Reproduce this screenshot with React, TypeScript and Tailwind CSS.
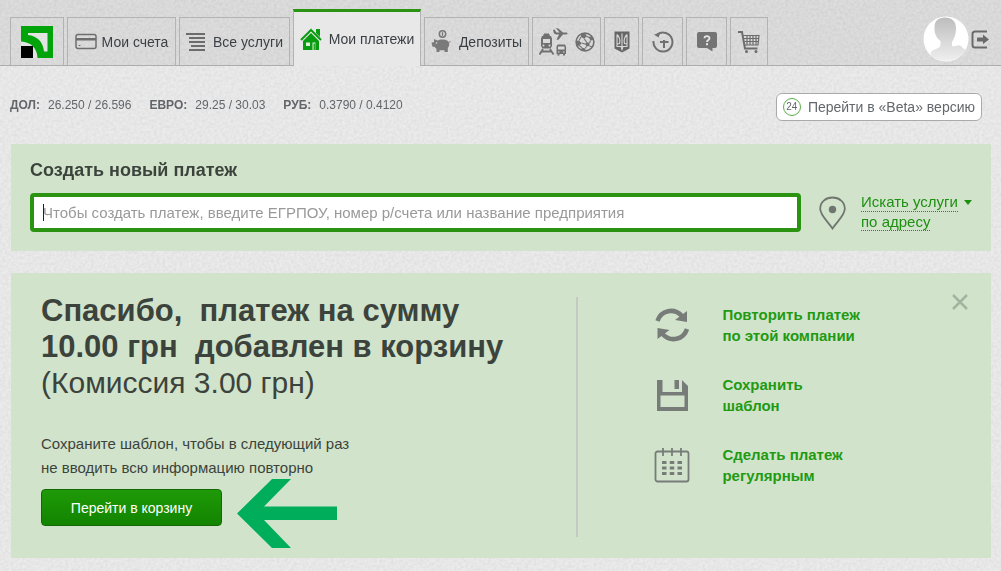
import type { ReactNode } from 'react';

const RATES = [
  { name: 'ДОЛ:', value: '26.250 / 26.596' },
  { name: 'ЕВРО:', value: '29.25 / 30.03' },
  { name: 'РУБ:', value: '0.3790 / 0.4120' },
];

function LogoIcon() {
  return (
    <svg width="32" height="32" viewBox="0 0 32 32" aria-hidden="true">
      <rect width="32" height="32" fill="#03a30c" />
      <path d="M7 7H26.500V25.500H23C22 16 16.500 10 7 9Z" fill="#e2e4e2" />
      <path d="M0 15.500C10 16 16 22 16.500 32H0Z" fill="#e2e4e2" />
      <rect y="20" width="12" height="12" fill="#000" />
    </svg>
  );
}

function CardIcon() {
  return (
    <svg width="22" height="17" viewBox="0 0 22 17" fill="none" aria-hidden="true">
      <rect x="1" y="1.500" width="20" height="14" rx="2" stroke="#6e6e6e" strokeWidth="1.500" />
      <path d="M1 5H21V7.500H1Z" fill="#6e6e6e" />
      <path d="M3.500 12.500H5.500" stroke="#6e6e6e" />
    </svg>
  );
}

function ListIcon() {
  return (
    <svg width="20" height="20" viewBox="0 0 20 20" aria-hidden="true">
      <path d="M0 2H19M3 6H19M3 10H19M5 14H19M3 18H19" stroke="#6c6c6c" strokeWidth="2" />
    </svg>
  );
}

function HouseIcon() {
  return (
    <svg width="22" height="23" viewBox="0 0 22 23" aria-hidden="true">
      <path d="M1 12L11 2L21 12" fill="none" stroke="#0a9c10" strokeWidth="2" />
      <path d="M16 1H20V9L16 5Z" fill="#0a9c10" />
      <path d="M11 5L19 13V22H3V13Z" fill="#0a9c10" />
      <path d="M6 14.500H10V18H6Z" fill="#dff0dc" />
      <path d="M12.500 14.500H15.500V22H12.500Z" fill="#dff0dc" />
      <path d="M13.500 15.500H15.500V22H13.500Z" fill="#2aa72e" />
    </svg>
  );
}

function PiggyIcon() {
  return (
    <svg width="20" height="23" viewBox="0 0 20 23" aria-hidden="true">
      <circle cx="11.500" cy="4" r="3.200" fill="none" stroke="#777" strokeWidth="1.500" />
      <path d="M11.500 2.200V5.800" stroke="#777" strokeWidth="1.300" />
      <path
        d="M3 9L6.500 10.500C8.500 9.300 15 8.600 17.300 11.500C19 13.800 18 16.500 16.800 18V22H13.500V20.300H8.500V22H5.500V19L3.300 16.800H1.500L0.500 12.800L3 12Z"
        fill="#7a7a7a"
      />
      <path d="M17.500 12.500L19.500 11.500" stroke="#7a7a7a" />
      <circle cx="5.500" cy="13" r="0.800" fill="#ddd" />
    </svg>
  );
}

function TransportIcon() {
  return (
    <svg width="29" height="28" viewBox="0 0 29 28" fill="#707070" aria-hidden="true">
      <path d="M5 5.500H10L11 8H4ZM3 8H12L13 10.500V18L11.500 20.500H3.500L2 18V10.500Z" />
      <path d="M4 11H11V15H4Z" fill="#dadada" />
      <circle cx="4.500" cy="17.500" r="1" fill="#dadada" />
      <circle cx="10.500" cy="17.500" r="1" fill="#dadada" />
      <path d="M4 21L0.500 26.500M11 21L14.500 26.500M2.500 23.500H12.500" stroke="#707070" strokeWidth="1.800" />
      <path d="M14 2L15.500 1.500L17.500 4.500H20.500L17 0.200H19L24 4.500H27.500C29 5 29 6 27.500 6.500H24L19.500 11.800H17.500L20 6.500H17L15 5.500Z" />
      <path d="M18.500 16.500H26L27 18.500V26H26V27.500H24V26H20.500V27.500H18.500V26H17.500V18.500Z" />
      <path d="M19 18.500H25.500V21.500H19ZM19 23.500H20.500V24.500H19ZM24 23.500H25.500V24.500H24Z" fill="#dadada" />
    </svg>
  );
}

function BallIcon() {
  return (
    <svg width="20" height="20" viewBox="0 0 20 20" fill="none" aria-hidden="true">
      <circle cx="10" cy="10" r="8.900" stroke="#707070" strokeWidth="1.600" />
      <path d="M6 1.800L10.500 2L12 4.500L9 6.500L6 5ZM13.500 5L17 4L18.500 8L15.500 8.500ZM1 9L4 8.500L6.500 11L4.500 14L2 13.500ZM11.500 10L14.500 11L14.500 14L11.500 14.500L10 12ZM7 15.500L10 16.500L10.500 18.800L6 18Z" fill="#707070" />
      <path d="M6 5L4 8.500M12 4.500L14 5.500M9 6.500L11.500 10M6.500 11L10 12M15.500 8.500L14.500 11M4.500 14L7 15.500M11.500 14.500L10 16.500M14.500 14L17 15" stroke="#707070" strokeWidth="1.100" />
    </svg>
  );
}

function TridentIcon() {
  return (
    <svg width="16" height="22" viewBox="0 0 16 22" fill="none" aria-hidden="true">
      <path d="M0.500 0.500H15.500V17.500L8 21.500L0.500 17.500Z" fill="#666" />
      <path d="M3 3.500V15.500H7L8 18.500L9 15.500H13V3.500M8 2.500V16M3 3.500C5.500 6 6.500 9 5.500 12.500L3 13M13 3.500C10.500 6 9.500 9 10.500 12.500L13 13" stroke="#d8d8d8" strokeWidth="1.100" />
    </svg>
  );
}

function HistoryIcon() {
  return (
    <svg width="22" height="22" viewBox="0 0 22 22" fill="none" aria-hidden="true">
      <path d="M1.500 10A9.500 9.500 0 1 0 5.500 3.300" stroke="#707070" strokeWidth="2" />
      <path d="M2 3.500L8.500 1.500L6.500 6.500Z" fill="#707070" />
      <path d="M8 11H16.500M12 9V17" stroke="#707070" strokeWidth="2" />
    </svg>
  );
}

function HelpIcon() {
  return (
    <svg width="20" height="20" viewBox="0 0 20 20" aria-hidden="true">
      <path d="M2 0H18Q20 0 20 2V14Q20 16 18 16H15.500V19.500L10 16H2Q0 16 0 14V2Q0 0 2 0Z" fill="#747474" />
      <path d="M7.500 6.200C7.500 3.600 12.500 3.500 12.500 6.200C12.500 8 10 8 10 10" fill="none" stroke="#e8e8e8" strokeWidth="1.800" />
      <rect x="9" y="11.200" width="2" height="2" fill="#e8e8e8" />
    </svg>
  );
}

function CartIcon() {
  return (
    <svg width="22" height="22" viewBox="0 0 22 22" fill="none" aria-hidden="true">
      <path d="M0 1H4L7 17.500H19.500" stroke="#6c6c6c" strokeWidth="2" />
      <path d="M5 4.500H21L20 14H7M6 7.500H20.500M6.500 10.500H20.500M9 4.500V14M12 4.500V14M15 4.500V14M18 4.500V14" stroke="#6c6c6c" strokeWidth="1.200" />
      <circle cx="8.500" cy="20.500" r="1.500" fill="#6c6c6c" />
      <circle cx="18" cy="20.500" r="1.500" fill="#6c6c6c" />
    </svg>
  );
}

function Avatar() {
  return (
    <svg width="46" height="46" viewBox="0 0 46 46" aria-hidden="true">
      <defs>
        <linearGradient id="person" x1="0" y1="0" x2="0" y2="1">
          <stop offset="0" stopColor="#bdbdbd" />
          <stop offset="1" stopColor="#efefef" />
        </linearGradient>
      </defs>
      <circle cx="23" cy="23" r="22.500" fill="#fff" />
      <path
        d="M22 1.500C29 1.500 33.500 6 33 13C32.800 19 31 23 29 26V30C33 31 36 28 38 30C40 33 42 33 43.500 34C36 46 17 48 8 40C7 37 8 35 11.500 33.500C14 32.500 17 32 17.500 29V25C13 22 11 17 11.500 11C11.700 5 15 1.500 22 1.500Z"
        fill="url(#person)"
      />
    </svg>
  );
}

function LogoutIcon() {
  return (
    <svg width="18" height="19" viewBox="0 0 18 19" aria-hidden="true">
      <path d="M16 1.500H4Q1.500 1.500 1.500 4V15Q1.500 17.500 4 17.500H16" fill="none" stroke="#6a6a6a" strokeWidth="2" />
      <path d="M6 7.500H12V4.500L18 9.500L12 14V11.500H6Z" fill="#6a6a6a" />
    </svg>
  );
}

function PinIcon() {
  return (
    <svg width="27" height="34" viewBox="0 0 27 34" className="mr-[15px] ml-[18px] shrink-0" aria-hidden="true">
      <path d="M13.500 32.500C9 25.500 1.200 19.500 1.200 12.800C1.200 6 6.800 1.500 13.500 1.500C20.200 1.500 25.800 6 25.800 12.800C25.800 19.500 18 25.500 13.500 32.500Z" fill="none" stroke="#6f766f" strokeWidth="1.800" />
      <circle cx="13.500" cy="13.500" r="3.700" fill="#6f766f" />
    </svg>
  );
}

function RepeatIcon() {
  return (
    <svg width="36" height="36" viewBox="0 0 36 36" aria-hidden="true">
      <path d="M3.500 14C7 3 20 0.500 28 9" fill="none" stroke="#777c78" strokeWidth="4.500" />
      <path d="M33 4V15L21 13Z" fill="#777c78" />
      <path d="M33 22C29.500 33 16.500 35.500 8.500 27" fill="none" stroke="#777c78" strokeWidth="4.500" />
      <path d="M3.500 32V21L15.500 23Z" fill="#777c78" />
    </svg>
  );
}

function SaveIcon() {
  return (
    <svg width="36" height="36" viewBox="0 0 36 36" aria-hidden="true">
      <path d="M3 3H8.500V15H28V3L34 9V34H3ZM6.500 18.500V30H30.500V18.500Z" fill="#777c78" fillRule="evenodd" />
      <rect x="20.500" y="3" width="4.500" height="9" fill="#777c78" />
    </svg>
  );
}

function CalendarIcon() {
  return (
    <svg width="36" height="36" viewBox="0 0 36 36" aria-hidden="true">
      <rect x="1.500" y="4.500" width="33" height="30" rx="2" fill="none" stroke="#777c78" strokeWidth="1.800" />
      <path d="M9 1V9M18 1V9M27 1V9" stroke="#777c78" strokeWidth="1.800" />
      <path d="M8 15.500H28M8 21H28M8 26.500H28" stroke="#777c78" strokeWidth="3" strokeDasharray="4.500 3.250" />
    </svg>
  );
}

// paper grain behind the whole page
function Grain() {
  return (
    <svg className="pointer-events-none fixed inset-0 -z-10 h-full w-full" aria-hidden="true">
      <filter id="grain">
        <feTurbulence type="fractalNoise" baseFrequency="0.35" numOctaves="3" />
        <feColorMatrix type="matrix" values="0 0 0 0 0.3  0 0 0 0 0.3  0 0 0 0 0.3  0.25 0 0 0 -0.08" />
      </filter>
      <rect width="100%" height="100%" filter="url(#grain)" />
    </svg>
  );
}

interface TabProps {
  label: string;
  hideLabel?: boolean;
  className: string;
  children: ReactNode;
}

function Tab({ label, hideLabel, className, children }: TabProps) {
  return (
    <a
      href="#"
      aria-label={label}
      className={`flex h-12 items-center justify-center border border-b-0 border-[#b3b3b3] text-sm text-[#3a3f44] ${className}`}
    >
      {children}
      {!hideLabel && <span className="whitespace-nowrap">{label}</span>}
    </a>
  );
}

const ACTIONS = [
  { icon: <RepeatIcon />, lines: ['Повторить платеж', 'по этой компании'] },
  { icon: <SaveIcon />, lines: ['Сохранить', 'шаблон'] },
  { icon: <CalendarIcon />, lines: ['Сделать платеж', 'регулярным'] },
];

export default function App() {
  return (
    <div className="relative isolate min-h-screen bg-[#ebebeb] font-['Liberation_Sans',Arial,sans-serif] text-[#3c433c]">
      <Grain />

      {/* Header */}
      <header className="flex items-end justify-between border-b border-[#adadad] bg-black/6 pr-3 pl-[10px] pt-[9px]">
        <nav className="flex items-end gap-[3px]">
          <Tab label="Приват24" hideLabel className="w-[54px]"><LogoIcon /></Tab>
          <Tab label="Мои счета" className="w-[109px] gap-[5px]"><CardIcon /></Tab>
          <Tab label="Все услуги" className="w-[111px] gap-[7px]"><ListIcon /></Tab>
          <a
            href="#"
            aria-current="page"
            className="-mb-px flex h-[57px] w-[128px] items-center justify-center gap-[7px] border-x border-t-3 border-x-[#b3b3b3] border-t-[#2a9412] bg-[#e8e8e8] text-sm text-[#3a3f44]"
          >
            <HouseIcon />
            <span className="whitespace-nowrap">Мои платежи</span>
          </a>
          <Tab label="Депозиты" className="w-[105px] gap-2"><PiggyIcon /></Tab>
          <Tab label="Транспорт и спорт" hideLabel className="w-[69px] gap-[7px]">
            <TransportIcon />
            <BallIcon />
          </Tab>
          <Tab label="Госуслуги" hideLabel className="w-[35px]"><TridentIcon /></Tab>
          <Tab label="История" hideLabel className="w-[41px]"><HistoryIcon /></Tab>
          <Tab label="Помощь" hideLabel className="w-[41px]"><HelpIcon /></Tab>
          <Tab label="Корзина" hideLabel className="w-[38px]"><CartIcon /></Tab>
        </nav>
        <div className="flex items-center gap-[2px] pb-[3px]">
          <Avatar />
          <button type="button" aria-label="Выход" className="cursor-pointer"><LogoutIcon /></button>
        </div>
      </header>

      <main className="pr-[10px] pb-3 pl-[11px]">
        {/* Exchange rates */}
        <div className="flex items-center justify-between pt-[27px] pr-[9px] pb-[23px]">
          <dl className="-ml-px flex gap-[18px] pb-1 text-xs text-[#62666a]">
            {RATES.map((rate) => (
              <div key={rate.name} className="flex gap-2">
                <dt className="font-bold">{rate.name}</dt>
                <dd>{rate.value}</dd>
              </div>
            ))}
          </dl>
          <button
            type="button"
            className="flex h-7 cursor-pointer items-center gap-[7px] rounded-md border border-[#aaa] bg-white px-[6px] text-sm text-[#63676b]"
          >
            <span className="flex size-[18px] items-center justify-center rounded-full border border-[#5aae4a] text-[10px]">24</span>
            Перейти в «Beta» версию
          </button>
        </div>

        {/* New payment */}
        <section className="bg-[#d1e4cb] px-[19px] pt-4 pb-[19px]">
          <label htmlFor="payment" className="mb-[13px] block text-lg leading-5 font-bold">Создать новый платеж</label>
          <div className="flex items-center">
            <div className="relative flex min-w-0 flex-1 items-center">
              <input
                id="payment"
                type="text"
                placeholder="Чтобы создать платеж, введите ЕГРПОУ, номер р/счета или название предприятия"
                className="peer h-[39px] w-full rounded border-4 border-[#2a9412] bg-white px-[9px] text-[15px] outline-none placeholder:text-[#999]"
              />
              {/* resting cursor, gives way to the native one on focus */}
              <span className="pointer-events-none absolute left-[13px] h-[17px] w-px bg-[#222] peer-focus:hidden" />
            </div>
            <PinIcon />
            <a href="#" className="w-[111px] text-[15px] leading-5 text-[#1f8f14]">
              <span className="flex items-center gap-[6px] whitespace-nowrap">
                <span className="border-b border-dotted border-[#1f8f14] leading-[18px]">Искать услуги</span>
                <svg width="8" height="5" viewBox="0 0 8 5" aria-hidden="true"><path d="M0 0H8L4 5Z" fill="#1f8f14" /></svg>
              </span>
              <span className="border-b border-dotted border-[#1f8f14]">по адресу</span>
            </a>
          </div>
        </section>

        {/* Result */}
        <section className="relative mt-[22px] flex bg-[#d1e4cb]">
          <div className="w-[58%] pt-5 pb-8 pl-[30px]">
            <h1 className="text-[31px] leading-9 font-bold whitespace-pre">{'Спасибо,  платеж на сумму\n10.00 грн  добавлен в корзину'}</h1>
            <p className="text-[30px] leading-9">(Комиссия 3.00 грн)</p>
            <p className="mt-[31px] text-[15px] leading-6">
              Сохраните шаблон, чтобы в следующий раз
              <br />
              не вводить всю информацию повторно
            </p>
            <div className="relative mt-[9px] w-fit">
              <button
                type="button"
                className="h-[37px] w-[181px] cursor-pointer rounded border border-[#136a05] bg-linear-to-b from-[#1f9a08] to-[#128400] text-sm text-white"
              >
                Перейти в корзину
              </button>
              <svg className="absolute -top-[10px] left-full ml-[15px]" width="100" height="69" viewBox="0 0 100 69" aria-hidden="true">
                <path d="M0 34.500L35 0H54L27 27.500H100V41H27L54 69H35Z" fill="#00ad5b" />
              </svg>
            </div>
          </div>
          <div className="-ml-[3px] mt-6 mb-[21px] flex-1 border-l-2 border-[#c4c9c1] pt-[7px] pl-[76px]">
            <ul className="flex flex-col gap-7">
              {ACTIONS.map((action) => (
                <li key={action.lines[0]}>
                  <a href="#" className="flex items-center gap-8 text-[15px] leading-[21px] font-bold text-[#1f9a12]">
                    {action.icon}
                    <span>
                      {action.lines[0]}
                      <br />
                      {action.lines[1]}
                    </span>
                  </a>
                </li>
              ))}
            </ul>
          </div>
          <button type="button" aria-label="Закрыть" className="absolute top-[21px] right-[23px] cursor-pointer">
            <svg width="16" height="16" viewBox="0 0 16 16" aria-hidden="true">
              <path d="M1 1L15 15M15 1L1 15" stroke="#a3b3a0" strokeWidth="2.500" />
            </svg>
          </button>
        </section>
      </main>
    </div>
  );
}
